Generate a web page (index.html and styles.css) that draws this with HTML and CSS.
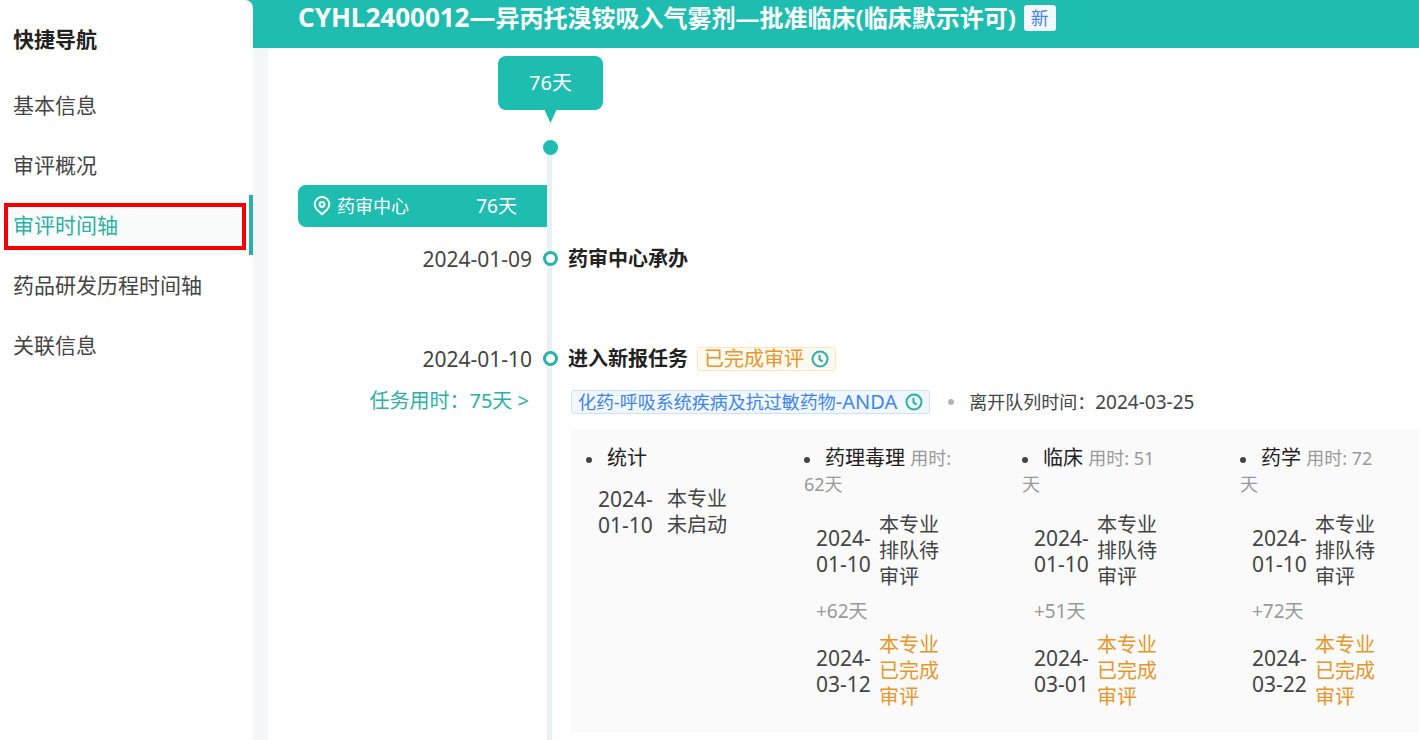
FILE: index.html
```html
<!DOCTYPE html>
<html lang="zh-CN">
<head>
<meta charset="utf-8">
<meta name="viewport" content="width=device-width, initial-scale=1">
<title>CYHL2400012 审评时间轴</title>
<link rel="stylesheet" href="styles.css">
</head>
<body>
<svg class="defs" aria-hidden="true">
  <symbol id="clock" viewBox="0 0 18 18">
    <circle cx="9" cy="9" r="7.5"/>
    <path d="M8.5 4.8V9.4L11.6 11.6"/>
  </symbol>
</svg>
<div class="page">
  <aside class="sidebar">
    <h2 class="sidebar-title">快捷导航</h2>
    <nav class="nav">
      <a class="nav-item" href="#base">基本信息</a>
      <a class="nav-item" href="#overview">审评概况</a>
      <a class="nav-item active" href="#timeline" aria-current="true">审评时间轴</a>
      <a class="nav-item" href="#history">药品研发历程时间轴</a>
      <a class="nav-item" href="#related">关联信息</a>
    </nav>
  </aside>
  <div class="main">
    <header class="header">
      <h1 class="title"><span class="code">CYHL2400012—</span>异丙托溴铵吸入气雾剂—批准临床(临床默示许可)</h1>
      <span class="new">新</span>
    </header>
    <main class="card">
      <section class="timeline" id="timeline">
        <div class="rail"></div>
        <div class="total">76天</div>
        <span class="node start"></span>

        <div class="center">
          <svg class="pin" viewBox="0 0 18 20" aria-hidden="true">
            <path d="M9 18.2L3.8 13.4A7.3 7.3 0 1 1 14.2 13.4Z"/>
            <circle cx="9" cy="8.4" r="2.4"/>
          </svg>
          <span class="center-name">药审中心</span>
          <span class="center-days">76天</span>
        </div>

        <time class="date first">2024-01-09</time>
        <span class="node ring first"></span>
        <div class="event first"><h3 class="event-title">药审中心承办</h3></div>

        <time class="date second">2024-01-10</time>
        <span class="node ring second"></span>
        <div class="event second">
          <h3 class="event-title">进入新报任务</h3>
          <span class="tag done">已完成审评<svg class="clock"><use href="#clock"/></svg></span>
        </div>

        <a class="usage" href="#usage">任务用时：75天 &gt;</a>
        <div class="detail">
          <div class="queue">
            <span class="tag dept"><span>化药-呼吸系统疾病及抗过敏药物<span class="kind">-ANDA</span></span><svg class="clock"><use href="#clock"/></svg></span>
            <span class="sep"></span>
            <span class="leave">离开队列时间：<time class="leave-date">2024-03-25</time></span>
          </div>
          <div class="panel">
            <section class="major">
              <div class="major-head"><span class="name">统计</span></div>
              <div class="step wide"><time class="step-date">2024-01-10</time><span>本专业未启动</span></div>
            </section>
            <section class="major">
              <div class="major-head"><span class="name">药理毒理</span> <span class="used">用时: 62天</span></div>
              <div class="step"><time class="step-date">2024-01-10</time><span>本专业排队待审评</span></div>
              <div class="plus">+62天</div>
              <div class="step"><time class="step-date">2024-03-12</time><span class="finished">本专业已完成审评</span></div>
            </section>
            <section class="major">
              <div class="major-head"><span class="name">临床</span> <span class="used">用时: 51天</span></div>
              <div class="step"><time class="step-date">2024-01-10</time><span>本专业排队待审评</span></div>
              <div class="plus">+51天</div>
              <div class="step"><time class="step-date">2024-03-01</time><span class="finished">本专业已完成审评</span></div>
            </section>
            <section class="major">
              <div class="major-head"><span class="name">药学</span> <span class="used">用时: 72天</span></div>
              <div class="step"><time class="step-date">2024-01-10</time><span>本专业排队待审评</span></div>
              <div class="plus">+72天</div>
              <div class="step"><time class="step-date">2024-03-22</time><span class="finished">本专业已完成审评</span></div>
            </section>
          </div>
        </div>
      </section>
    </main>
  </div>
</div>
</body>
</html>
```
FILE: styles.css
```css
:root {
  --teal: #1fbdb0;
  --teal-text: #2bb1a5;
  --text: #444;
  --rail: #e8f1f5;
}

* { box-sizing: border-box; }

body {
  margin: 0;
  background: var(--teal);
  color: var(--text);
  font-family: "Noto Sans", "Noto Sans CJK SC", sans-serif;
  font-size: 20px;
  line-height: 26px;
}

h1, h2, h3 { margin: 0; }
a { text-decoration: none; }
.defs { display: none; }

.page {
  display: grid;
  grid-template-columns: 253px minmax(0, 1fr);
  min-height: 100vh;
}

/* Sidebar */
.sidebar {
  padding-top: 24px;
  background: #fff;
  border-top-right-radius: 8px;
}

.sidebar-title {
  padding: 0 13px;
  margin-bottom: 21px;
  color: #222;
  font-size: 21px;
  line-height: 30px;
}

.nav { display: flex; flex-direction: column; }

.nav-item {
  position: relative;
  padding: 0 13px;
  color: var(--text);
  font-size: 21px;
  line-height: 60px;
}

.nav-item.active {
  border-right: 4px solid var(--teal-text);
  background: #fafcfc;
  color: var(--teal-text);
}

.nav-item.active::after {
  content: "";
  position: absolute;
  inset: 8px 3px 5px 4px;
  border: 4px solid #f70000;
}

/* Header */
.main {
  display: flex;
  flex-direction: column;
  background: #f5f6f8;
}

.header {
  display: flex;
  align-items: center;
  gap: 8px;
  padding: 0 45px 13px;
  background: var(--teal);
}

.title {
  color: #fff;
  font-size: 24px;
  line-height: 34px;
  white-space: nowrap;
}

.code { font-size: 26px; }

.new {
  padding: 0 7px;
  border-radius: 3px;
  background: #f3f8ff;
  color: #4a86ee;
  font-size: 18px;
  line-height: 26px;
}

/* Timeline */
.card {
  display: flex;
  flex: 1;
  flex-direction: column;
  margin-left: 15px;
  padding-left: 30px;
  background: #fff;
}

.timeline {
  display: grid;
  flex: 1;
  grid-template-columns: 249px 7px minmax(0, 1fr);
  grid-template-rows: 92px 45px 42px 111px 42px auto;
}

.rail {
  grid-area: 2 / 2 / 7 / 3;
  width: 5px;
  background: var(--rail);
}

.total {
  grid-area: 1 / 2;
  justify-self: center;
  align-self: start;
  width: 105px;
  margin-top: 8px;
  border-radius: 8px;
  background: var(--teal);
  color: #fff;
  line-height: 54px;
  text-align: center;
}

.total::after {
  content: "";
  display: block;
  width: 12px;
  height: 13px;
  margin: 0 auto -13px;
  background: var(--teal);
  clip-path: polygon(0 0, 100% 0, 50% 100%);
}

.node {
  grid-column: 2;
  justify-self: center;
  width: 15px;
  height: 15px;
  border-radius: 50%;
  background: var(--teal);
}

.node.start { grid-row: 2; }

.node.ring {
  border: 3px solid var(--teal-text);
  background: #fff;
}

.center {
  grid-area: 3 / 1;
  display: flex;
  align-items: center;
  padding: 0 30px 0 15px;
  border-radius: 8px 0 0 8px;
  background: var(--teal);
  color: #fff;
  font-size: 18px;
}

.center-days { margin-left: auto; font-size: 19px; }

.pin {
  width: 18px;
  height: 20px;
  margin-right: 6px;
  fill: none;
  stroke: #fff;
  stroke-width: 2;
  stroke-linejoin: round;
}

.first { grid-row: 4; margin-top: 11px; }
.second { grid-row: 5; }

.date {
  grid-column: 1;
  padding-right: 15px;
  font-size: 21px;
  line-height: 42px;
  text-align: right;
}

.node.first { margin-top: 24px; }
.node.second { margin-top: 13px; }

.event {
  grid-column: 3;
  display: flex;
  align-items: center;
  gap: 9px;
  height: 42px;
  padding-left: 14px;
}

.event-title { color: #222; font-size: 20px; }

.tag {
  display: inline-flex;
  align-items: center;
  gap: 7px;
  padding: 0 6px;
  border: 1px solid;
  border-radius: 3px;
  line-height: 22px;
  white-space: nowrap;
}

.tag.done {
  border-color: #fae6c4;
  background: #fffaf0;
  color: #e6962a;
}

.tag.dept {
  gap: 8px;
  border-color: #cfe2fa;
  background: #f1f7ff;
  color: #4285ea;
  font-size: 18px;
}

.kind { font-size: 20px; line-height: 20px; }

.clock {
  width: 18px;
  height: 18px;
  fill: none;
  stroke: var(--teal-text);
  stroke-width: 2;
}

.usage {
  grid-area: 6 / 1;
  padding-right: 18px;
  color: var(--teal-text);
  line-height: 42px;
  text-align: right;
}

.detail { grid-area: 6 / 3; padding: 0 0 8px 17px; }

.queue {
  display: flex;
  align-items: center;
  height: 44px;
  margin-bottom: 5px;
}

.sep {
  width: 6px;
  height: 6px;
  margin: 0 15px 0 18px;
  border-radius: 50%;
  background: #b5b5b5;
}

.leave { font-size: 18px; white-space: nowrap; }
.leave-date { font-size: 19px; }

/* Review panel */
.panel {
  display: grid;
  grid-template-columns: repeat(4, minmax(0, 1fr));
  gap: 70px;
  padding: 16px 31px 22px 15px;
  background: #fafafa;
}

.major-head { margin-bottom: 15px; }

.major-head::before {
  content: "";
  display: inline-block;
  width: 6px;
  height: 6px;
  margin-right: 15px;
  border-radius: 50%;
  background: #444;
  vertical-align: middle;
}

.name { color: #222; }
.used, .plus { color: #999; font-size: 18px; }

.step {
  display: grid;
  grid-template-columns: 56px minmax(0, 1fr);
  align-items: center;
  gap: 7px;
  margin-left: 12px;
}

.step.wide { gap: 13px; }
.step-date { font-size: 21px; }
.plus { margin: 8px 0 8px 12px; font-size: 19px; }
.finished { color: #e6962a; }
```
